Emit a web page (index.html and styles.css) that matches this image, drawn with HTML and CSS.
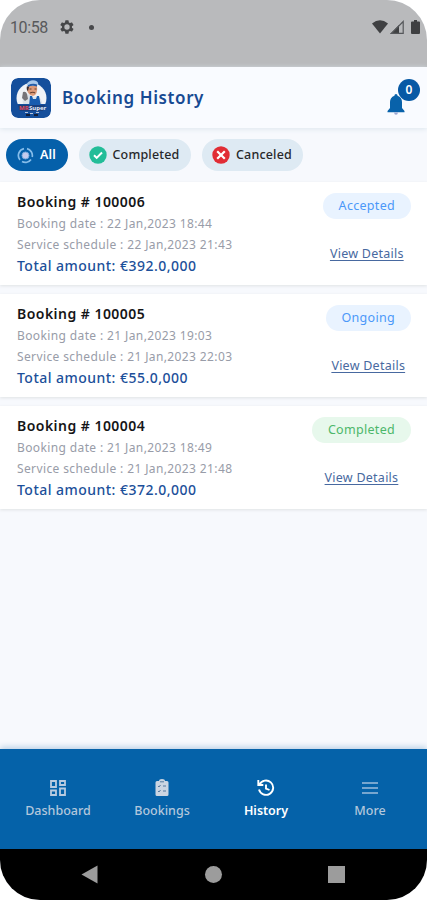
FILE: index.html
```html
<!DOCTYPE html>
<html lang="en">
<head>
<meta charset="utf-8">
<title>Booking History</title>
<link rel="stylesheet" href="styles.css">
</head>
<body>
<div class="phone">
  <div class="status">
    <span class="clock">10:58</span>
    <svg class="gear" width="16" height="16" viewBox="0 0 24 24"><path fill="#454648" fill-rule="evenodd" d="M19.4 13a7.600 7.600 0 0 0 0-2l2.100-1.600a.5.5 0 0 0 .1-.7l-2-3.400a.5.5 0 0 0-.6-.2l-2.500 1a7.300 7.300 0 0 0-1.700-1l-.4-2.600a.5.5 0 0 0-.5-.5h-4a.5.5 0 0 0-.5.5L9 5.100a7.300 7.300 0 0 0-1.700 1l-2.500-1a.5.5 0 0 0-.6.200l-2 3.400a.5.5 0 0 0 .1.700L4.500 11a7.600 7.600 0 0 0 0 2l-2.200 1.600a.5.5 0 0 0-.1.700l2 3.400c.1.200.4.300.6.200l2.500-1a7.300 7.300 0 0 0 1.700 1l.4 2.600c0 .3.200.5.5.5h4c.3 0 .5-.2.5-.5l.4-2.600a7.300 7.300 0 0 0 1.700-1l2.500 1c.2.100.5 0 .6-.2l2-3.400a.5.5 0 0 0-.1-.7zM12 16a4 4 0 1 1 0-8 4 4 0 0 1 0 8z"/></svg>
    <span class="dot"></span>
    <div class="signals">
      <svg width="16" height="14" viewBox="0 0 16 14"><path fill="#3f4042" d="M0 3.500Q8-2.800 16 3.500L8 13.500z"/></svg>
      <svg width="14" height="14" viewBox="0 0 14 14"><path fill="#3f4042" d="M0 14 9 5v9z"/><path fill="none" stroke="#55575a" stroke-width="1.200" d="M1.500 13.400 13.200 1.500v11.900z"/></svg>
      <svg class="battery" width="9" height="14" viewBox="0 0 9 14"><path fill="#3f4042" d="M1 1.500h2V0h3v1.500h2q1 0 1 1V13q0 1-1 1H1q-1 0-1-1V2.500q0-1 1-1z"/></svg>
    </div>
  </div>
  <header class="header">
    <svg class="logo" width="40" height="40" viewBox="0 0 40 40">
      <rect width="40" height="40" rx="7" fill="#154f9c"/>
      <circle cx="20.500" cy="20" r="15" fill="#f0f3f7"/>
      <path d="M5.500 26h30l-3 6-5 5H13l-5-5z" fill="#154f9c"/>
      <path d="M13 18q3-3 6-1l4 2 4-1q4 3 4 8H12q-1-5 1-8z" fill="#dbe1e8"/>
      <path d="M19 18h2l1 3h3l1-3h2l2 10H18z" fill="#185caf"/>
      <path d="M16 8h10q1 9-4 10-5-1-6-6z" fill="#dc9a79"/>
      <path d="M16 8q-1 4 1 5l1-4z" fill="#3b2b2b"/>
      <path d="M18.500 11h2m3 0h2M19 15q3-1.500 5 0" stroke="#68412f" stroke-width="1.200" fill="none"/>
      <path d="M18 3.500q3-2 6-1 4 1 3 5l-4-1-7 2q-1-3 2-5z" fill="#a9c9eb"/>
      <path d="M17 7q5-2 9-.5v2Q21 7 17 9z" fill="#255ca5"/>
      <path d="M12 14q3-1 4 2l1 5-3 2-3-3z" fill="#777579"/>
      <path d="M7 27h27l-2 6H9z" fill="#193f7d"/>
      <text x="8" y="32" class="logo-red">MR</text><text x="18" y="32" class="logo-white">Super</text>
      <path d="M14 34.500h3m2 1h3m3-1h3" stroke="#b8c6dc"/>
      <path d="M15 36h4v2h-4zm8 0h4v2h-4z" fill="#111e39"/>
    </svg>
    <h1>Booking History</h1>
    <div class="bell">
      <svg width="18" height="22" viewBox="0 0 18 22"><path fill="#0862aa" d="M9 0q1.500 0 1.600 1.800Q15 3.500 15 8v6l2.500 3v1.200H.5V17L3 14V8q0-4.500 4.400-6.200Q7.500 0 9 0z"/><path fill="#9ba6d2" d="M7 18.500h4q-.3 2.200-2 2.200T7 18.500z"/></svg>
      <span class="count">0</span>
    </div>
  </header>
  <div class="filters">
    <div class="chip active"><svg width="17" height="17" viewBox="0 0 17 17"><g fill="none" stroke="#86bdea" stroke-width="1.700"><path d="M7 1.600a7 7 0 0 0-4 11.300M5 14.600a7 7 0 0 0 9-2M15.200 10A7 7 0 0 0 10 1.700"/></g><circle cx="8.500" cy="8.500" r="3.500" fill="#c4cbed" stroke="#78aadd"/></svg><span>All</span></div>
    <div class="chip completed"><svg width="18" height="18" viewBox="0 0 18 18"><circle cx="9" cy="9" r="8.700" fill="#22bd98"/><path d="m5 9.200 2.700 2.700L13 6.500" fill="none" stroke="#fff" stroke-width="2"/></svg><span>Completed</span></div>
    <div class="chip canceled"><svg width="18" height="18" viewBox="0 0 18 18"><circle cx="9" cy="9" r="8.700" fill="#e12d35"/><path d="m5.200 5.200 7.600 7.600m0-7.600-7.600 7.600" stroke="#fff" stroke-width="2.200"/></svg><span>Canceled</span></div>
  </div>
  <main class="list">
    <article class="card">
      <div class="info"><h2>Booking # 100006</h2><p class="date">Booking date : 22 Jan,2023 18:44</p><p class="schedule">Service schedule : 22 Jan,2023 21:43</p><p class="total">Total amount: €392.0,000</p></div>
      <div class="side"><span class="badge">Accepted</span><a>View Details</a></div>
    </article>
    <article class="card">
      <div class="info"><h2>Booking # 100005</h2><p class="date">Booking date : 21 Jan,2023 19:03</p><p class="schedule">Service schedule : 21 Jan,2023 22:03</p><p class="total">Total amount: €55.0,000</p></div>
      <div class="side"><span class="badge">Ongoing</span><a>View Details</a></div>
    </article>
    <article class="card">
      <div class="info"><h2>Booking # 100004</h2><p class="date">Booking date : 21 Jan,2023 18:49</p><p class="schedule">Service schedule : 21 Jan,2023 21:48</p><p class="total">Total amount: €372.0,000</p></div>
      <div class="side"><span class="badge done">Completed</span><a>View Details</a></div>
    </article>
  </main>
  <nav class="tabs">
    <div class="tab"><svg width="16" height="16" viewBox="0 0 16 16"><g fill="none" stroke="#b9cbe0" stroke-width="1.800"><path d="M1 1h5v6H1zM10 1h5v4h-5zM1 10.500h5V15H1zM10 8.500h5V15h-5z"/></g></svg><span>Dashboard</span></div>
    <div class="tab"><svg width="14" height="18" viewBox="0 0 14 18"><path fill="#cbd5e2" d="M2 2h2q0-2 3-2t3 2h2q1.500 0 1.500 1.500v12Q13.500 17 12 17H2Q.5 17 .5 15.500v-12Q.5 2 2 2z"/><path d="M5 2.800h4M3 7l1 1 1.500-2M8 7h3M3 12l1 1 1.500-2M8 12h3" stroke="#55799f" fill="none"/></svg><span>Bookings</span></div>
    <div class="tab current"><svg width="18" height="18" viewBox="0 0 18 18"><path d="M2.500 5.500A7.200 7.200 0 1 1 2 10.500M1.300 1v5h5M9 5.500v4l3.500 1.500" fill="none" stroke="#fff" stroke-width="1.900"/></svg><span>History</span></div>
    <div class="tab"><svg width="16" height="12" viewBox="0 0 16 12"><path d="M0 1h16M0 6h16M0 11h16" stroke="#9dbddb" stroke-width="1.400"/></svg><span>More</span></div>
  </nav>
  <div class="system">
    <svg width="17" height="19" viewBox="0 0 17 19"><path fill="#9c9c9c" d="M16.500.5v18L.5 9.500z"/></svg>
    <span class="home"></span>
    <span class="recent"></span>
  </div>
</div>
</body>
</html>
```

FILE: styles.css
```css
* { box-sizing: border-box; }
body { margin: 0; background: #fff; font-family: "Noto Sans", "Open Sans", sans-serif; }
h1, h2, p { margin: 0; white-space: nowrap; }
svg { display: block; flex: none; }
.phone { width: 427px; height: 900px; display: flex; flex-direction: column; border-radius: 40px; overflow: hidden; background: #f7f9fd; }
.status { height: 67px; flex: none; background: #b9babc; display: flex; align-items: flex-start; padding: 19px 7px 0 10px; }
.clock { font: 16px/18px Roboto, sans-serif; color: #58595b; width: 49px; letter-spacing: -.4px; }
.status .dot { width: 5px; height: 5px; border-radius: 50%; background: #48494b; margin: 6px 0 0 14px; }
.signals { display: flex; gap: 2px; margin-left: auto; padding-top: 1px; }
.battery { margin-left: 5px; }
.header { height: 61px; flex: none; display: flex; align-items: center; padding: 0 7px 0 11px; background: #f9fbff; box-shadow: 0 1px 5px #dce6ed; position: relative; }
.logo { border-radius: 7px; }
.logo-red { font-size: 6px; font-weight: 700; fill: #e34b5c; }
.logo-white { font-size: 6px; font-weight: 700; fill: #e5edf8; }
h1 { margin-left: 11px; font-size: 17px; line-height: 24px; font-weight: 600; color: #174a93; letter-spacing: .6px; padding-top: 1px; }
.bell { width: 35px; height: 38px; margin-left: auto; padding: 15px 0 0 2px; position: relative; }
.count { position: absolute; right: 0; top: 0; width: 22px; height: 22px; border-radius: 50%; background: #0759a5; color: #fff; font-size: 12px; line-height: 22px; font-weight: 600; text-align: center; }
.filters { height: 54px; flex: none; display: flex; align-items: flex-start; gap: 11px; padding: 11px 6px; }
.chip { height: 32px; border-radius: 16px; background: #deeaf3; display: flex; align-items: center; color: #27282a; font-size: 12.500px; line-height: 18px; font-weight: 500; white-space: nowrap; letter-spacing: .17px; }
.chip span { padding-bottom: 1px; }
.active { width: 62px; background: #0560aa; color: #fff; padding-left: 11px; gap: 6px; font-weight: 600; }
.completed { width: 112px; padding-left: 10px; gap: 5.500px; }
.canceled { width: 101px; padding-left: 10px; gap: 6px; }
.list { display: flex; flex-direction: column; gap: 8.800px; flex: 1; }
.card { height: 103px; background: #fff; box-shadow: 0 1px 3px #dfe2e4; display: flex; justify-content: space-between; padding: 9px 16px 0 17px; }
h2 { font-size: 14px; line-height: 22px; font-weight: 600; color: #151517; letter-spacing: .47px; }
.date, .schedule { font-size: 12px; line-height: 21px; color: #989ca8; letter-spacing: .38px; }
.total { font-size: 14px; line-height: 22px; font-weight: 500; color: #1c509a; letter-spacing: .47px; }
.side { display: flex; flex-direction: column; align-items: center; padding-top: 2px; }
.badge { height: 26px; border-radius: 13px; padding: 0 16px; font-size: 12.500px; line-height: 26px; color: #4b98f9; background: #e9f3ff; letter-spacing: .3px; }
.badge.done { color: #4cb76a; background: #e7f8ec; }
.side a { margin-top: 25px; font-size: 12.500px; line-height: 20px; color: #4869a0; text-decoration: underline; text-underline-offset: 2px; letter-spacing: .25px; }
.tabs { height: 100px; flex: none; background: #0562a9; box-shadow: 0 -2px 6px #b9d0e5; display: grid; grid-template-columns: repeat(4, 104px); padding-left: 6px; }
.tab { display: flex; flex-direction: column; align-items: center; padding-top: 30px; color: #b3c7dc; font-size: 12.500px; font-weight: 500; line-height: 18px; }
.tab svg { height: 18px; margin-bottom: 5px; }
.current { color: #fff; font-weight: 600; }
.system { height: 51px; flex: none; background: #000; display: flex; align-items: center; justify-content: space-between; padding: 0 82px 0 81px; }
.home { width: 17px; height: 17px; border-radius: 50%; background: #9c9c9c; }
.recent { width: 17px; height: 17px; background: #9c9c9c; }
```
